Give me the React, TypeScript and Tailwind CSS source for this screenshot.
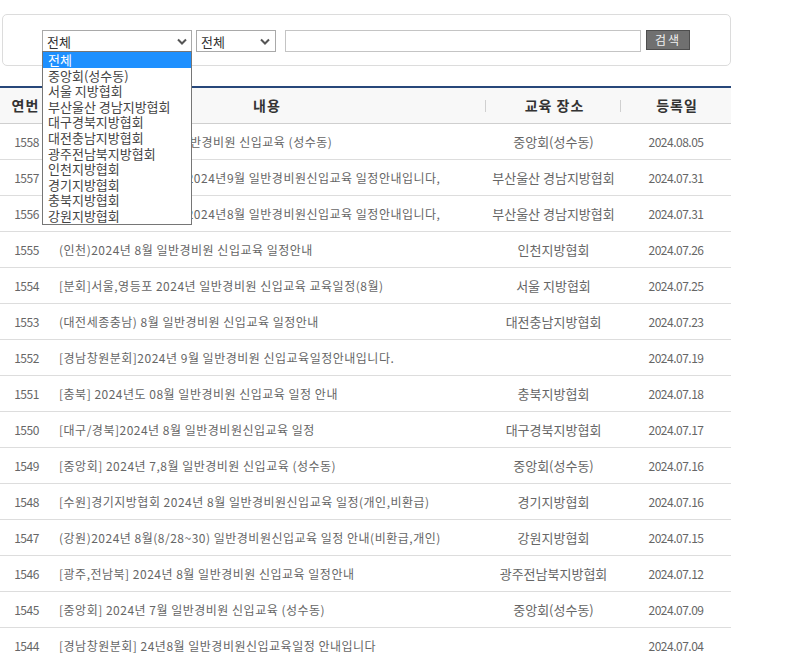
import React from "react";

const rows: [string, string, string, string][] = [
  ["1558", "[중앙회] 2024년 08월 일반경비원 신입교육 (성수동)", "중앙회(성수동)", "2024.08.05"],
  ["1557", "[부산울산경남지방협회] 2024년9월 일반경비원신입교육 일정안내입니다,", "부산울산 경남지방협회", "2024.07.31"],
  ["1556", "[부산울산경남지방협회] 2024년8월 일반경비원신입교육 일정안내입니다,", "부산울산 경남지방협회", "2024.07.31"],
  ["1555", "(인천)2024년 8월 일반경비원 신입교육 일정안내", "인천지방협회", "2024.07.26"],
  ["1554", "[분회]서울,영등포 2024년 일반경비원 신입교육 교육일정(8월)", "서울 지방협회", "2024.07.25"],
  ["1553", "(대전세종충남) 8월 일반경비원 신입교육 일정안내", "대전충남지방협회", "2024.07.23"],
  ["1552", "[경남창원분회]2024년 9월 일반경비원 신입교육일정안내입니다.", "", "2024.07.19"],
  ["1551", "[충북] 2024년도 08월 일반경비원 신입교육 일정 안내", "충북지방협회", "2024.07.18"],
  ["1550", "[대구/경북]2024년 8월 일반경비원신입교육 일정", "대구경북지방협회", "2024.07.17"],
  ["1549", "[중앙회] 2024년 7,8월 일반경비원 신입교육 (성수동)", "중앙회(성수동)", "2024.07.16"],
  ["1548", "[수원]경기지방협회 2024년 8월 일반경비원신입교육 일정(개인,비환급)", "경기지방협회", "2024.07.16"],
  ["1547", "(강원)2024년 8월(8/28~30) 일반경비원신입교육 일정 안내(비환급,개인)", "강원지방협회", "2024.07.15"],
  ["1546", "[광주,전남북] 2024년 8월 일반경비원 신입교육 일정안내", "광주전남북지방협회", "2024.07.12"],
  ["1545", "[중앙회] 2024년 7월 일반경비원 신입교육 (성수동)", "중앙회(성수동)", "2024.07.09"],
  ["1544", "[경남창원분회] 24년8월 일반경비원신입교육일정 안내입니다", "", "2024.07.04"],
];

const options = [
  "전체",
  "중앙회(성수동)",
  "서울 지방협회",
  "부산울산 경남지방협회",
  "대구경북지방협회",
  "대전충남지방협회",
  "광주전남북지방협회",
  "인천지방협회",
  "경기지방협회",
  "충북지방협회",
  "강원지방협회",
];

function Chevron() {
  return (
    <svg width="10" height="7" viewBox="0 0 10 7" className="shrink-0">
      <polyline points="1,1.5 5,5.5 9,1.5" fill="none" stroke="#555" strokeWidth="2" />
    </svg>
  );
}

export default function App() {
  return (
    <div className="min-h-[662px] w-[800px] overflow-hidden bg-white font-['Noto_Sans_CJK_KR','Noto_Sans',sans-serif] text-[12px] text-[#666]">
      <div className="w-[731px] pt-[14px]">
        {/* search box */}
        <div className="ml-[2px] h-[52px] w-[729px] rounded-[5px] border border-[#dcdcdc] pl-[39px] pt-[15px]">
          <div className="flex items-start">
            <div className="relative">
              <div className="flex h-[22px] w-[150px] items-center justify-between border border-[#a9a9a9] bg-white pl-[4px] pr-[4px] text-[13px] leading-none text-[#333]">
                <span>전체</span>
                <Chevron />
              </div>
              <div className="absolute left-0 top-[21px] z-10 w-[150px] border border-[#767676] bg-white text-[13px] text-[#444]">
                {options.map((o, i) => (
                  <div
                    key={o}
                    className={
                      i === 0
                        ? "h-[15.6px] bg-[#1e90ff] pl-[5px] leading-[15px] text-white"
                        : "h-[15.6px] pl-[5px] leading-[15px]"
                    }
                  >
                    {o}
                  </div>
                ))}
              </div>
            </div>
            <div className="ml-[4px] flex h-[22px] w-[80px] items-center justify-between border border-[#a9a9a9] bg-white pl-[4px] pr-[5px] text-[13px] leading-none text-[#333]">
              <span>전체</span>
              <Chevron />
            </div>
            <div className="ml-[9px] h-[22px] w-[356px] border border-[#c4c4c4] bg-white" />
            <div className="ml-[5px] flex h-[20px] w-[44px] items-center justify-center border border-[#4e4e4e] bg-[#707070] text-[12px] leading-none tracking-[2px] text-[#f0f0f0]">
              검색
            </div>
          </div>
        </div>

        {/* table */}
        <div className="mt-[20px] w-[731px] border-t-2 border-[#27477a]">
          <div className="grid h-[36px] grid-cols-[48px_438px_135px_110px] border-b border-[#cfcfcf] bg-[#f8f8f8] text-[14px] font-bold tracking-[1px] text-[#333]">
            <div className="flex items-center justify-center pl-[3px]">연번</div>
            <div className="relative flex items-center justify-center">
              내용
              <span className="absolute right-0 top-[12px] h-[12px] w-px bg-[#d0d0d0]" />
            </div>
            <div className="relative flex items-center justify-center pl-[2px]">
              교육 장소
              <span className="absolute right-0 top-[12px] h-[12px] w-px bg-[#d0d0d0]" />
            </div>
            <div className="flex items-center justify-center pl-[2px]">등록일</div>
          </div>
          {rows.map((r) => (
            <div
              key={r[0]}
              className="grid h-[36px] grid-cols-[48px_438px_135px_110px] border-b border-[#dddddd] leading-none"
            >
              <div className="flex items-center justify-center pl-[5px] text-[12px] tracking-[-0.5px]">{r[0]}</div>
              <div className="flex items-center overflow-hidden whitespace-nowrap pl-[11px] text-[12px] tracking-[0.5px]">
                {r[1]}
              </div>
              <div className="flex items-center justify-center text-[13px]">{r[2]}</div>
              <div className="flex items-center justify-center text-[12px] tracking-[-0.5px]">{r[3]}</div>
            </div>
          ))}
        </div>
      </div>
    </div>
  );
}
